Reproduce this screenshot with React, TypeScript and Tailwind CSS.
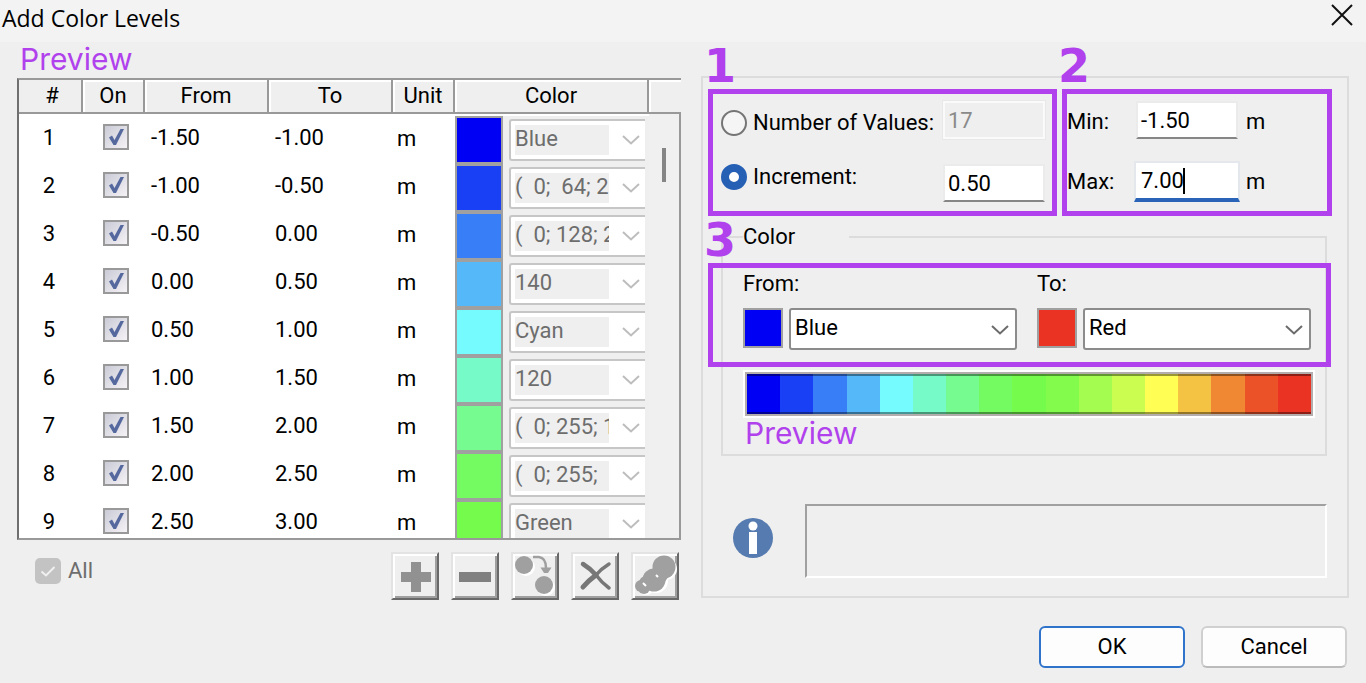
import { useState } from 'react';
import type { ReactNode } from 'react';

interface Level {
  from: string;
  to: string;
  color: string;
  label: string;
}

const LEVELS: Level[] = [
  { from: '-1.50', to: '-1.00', color: '#0000f5', label: 'Blue' },
  { from: '-1.00', to: '-0.50', color: '#1940f5', label: '(\u00a0\u00a00;\u00a0\u00a064; 255)' },
  { from: '-0.50', to: '0.00', color: '#387ef7', label: '(\u00a0\u00a00; 128; 255)' },
  { from: '0.00', to: '0.50', color: '#55b9f9', label: '140' },
  { from: '0.50', to: '1.00', color: '#75fbfd', label: 'Cyan' },
  { from: '1.00', to: '1.50', color: '#76fbc8', label: '120' },
  { from: '1.50', to: '2.00', color: '#75fb8f', label: '(\u00a0\u00a00; 255; 128)' },
  { from: '2.00', to: '2.50', color: '#75fb62', label: '(\u00a0\u00a00; 255;\u00a0\u00a064)' },
  { from: '2.50', to: '3.00', color: '#75fb4c', label: 'Green' },
];

const RAMP = [
  '#0000f5', '#1940f5', '#387ef7', '#55b9f9', '#75fbfd', '#76fbc8', '#75fb8f', '#75fb62', '#75fb4c',
  '#82fb4d', '#a3fc4f', '#cbfd51', '#fffe54', '#f5c344', '#ef8733', '#eb5228', '#ea3323',
];

const TH = 'h-[34px] border-b-2 border-[#999] p-0 font-normal text-center align-middle';
const TH_EDGE = 'shadow-[inset_2px_2px_0_#fff]';

function Chevron({ className }: { className: string }) {
  return (
    <svg className={className} width="18" height="12" viewBox="0 0 18 12" fill="none" stroke="currentColor" strokeWidth="2" aria-hidden="true">
      <path d="M1 2l8 7.5L17 2" />
    </svg>
  );
}

function RowCheckbox({ label }: { label: string }) {
  return (
    <span className="relative block size-[26px]">
      <input
        type="checkbox"
        defaultChecked
        aria-label={label}
        className="peer block size-[26px] appearance-none border-2 border-[#999] bg-linear-to-br from-[#c9cbd6] to-[#f6f2f6]"
      />
      <svg className="pointer-events-none absolute inset-0 hidden peer-checked:block" viewBox="0 0 26 26" fill="#56699f" aria-hidden="true">
        <path d="M6 13.5l3-2 2.5 4.500L17.500 5h3.500L13 21h-2.500z" />
      </svg>
    </span>
  );
}

function ToolButton({ label, children }: { label: string; children: ReactNode }) {
  return (
    <button
      type="button"
      aria-label={label}
      className="size-12 border-2 border-t-[#e3e3e3] border-l-[#e3e3e3] border-r-[#696969] border-b-[#696969] shadow-[inset_2px_2px_0_#fff,inset_-2px_-2px_0_#a0a0a0]"
    >
      <svg viewBox="2 2 44 44" className="block size-11" aria-hidden="true">
        {children}
      </svg>
    </button>
  );
}

function Marker({ children }: { children: string }) {
  return (
    <span className="pointer-events-none absolute -top-[51px] -left-[9px] font-['DejaVu_Sans',sans-serif] text-[46px] leading-[46px] font-bold text-[#b041ec]">
      {children}
    </span>
  );
}

function Caption({ children }: { children: string }) {
  return <p className="font-['Inter',sans-serif] text-[30px] leading-[34px] font-normal text-[#b041ec]">{children}</p>;
}

function ColorPicker({ id, label, color, options }: { id: string; label: string; color: string; options: string[] }) {
  return (
    <div>
      <label htmlFor={id} className="block leading-[30px]">{label}</label>
      <div className="mt-[9px] flex gap-1.5">
        <span className="size-10 shrink-0 border-2 border-[#a0a0a0]" style={{ backgroundColor: color }} />
        <span className="relative min-w-0 flex-1">
          <select id={id} className="block h-[42px] w-full appearance-none rounded-[3px] border-2 border-[#8c8c8c] bg-white px-1 pb-0.5">
            {options.map((o) => <option key={o}>{o}</option>)}
          </select>
          <Chevron className="pointer-events-none absolute top-4 right-2 text-[#6b6b6b]" />
        </span>
      </div>
    </div>
  );
}

function LevelsTable() {
  return (
    <div className="h-[462px] overflow-hidden border-y-2 border-l-2 border-y-[#999] border-l-[#6f6f6f] bg-white">
      <table className="w-full table-fixed border-separate border-spacing-0">
        <colgroup>
          <col className="w-[64px]" />
          <col className="w-[62px]" />
          <col className="w-[124px]" />
          <col className="w-[124px]" />
          <col className="w-[62px]" />
          <col />
          <col className="w-[32px]" />
        </colgroup>
        <thead className="bg-[#efefef]">
          <tr>
            <th className={`${TH} border-r-2 pl-1`}>#</th>
            <th className={`${TH} ${TH_EDGE} border-r-2`}>On</th>
            <th className={`${TH} ${TH_EDGE} border-r-2`}>From</th>
            <th className={`${TH} ${TH_EDGE} border-r-2`}>To</th>
            <th className={`${TH} ${TH_EDGE} border-r-2`}>Unit</th>
            <th className={`${TH} ${TH_EDGE} border-r-2`}>Color</th>
            <th className={`${TH} ${TH_EDGE}`} aria-label="Scroll" />
          </tr>
        </thead>
        <tbody>
          <tr aria-hidden="true">
            <td colSpan={6} className="h-0.5 p-0" />
            <td rowSpan={LEVELS.length + 1} className="border-r-2 border-[#999] bg-[#f0f0f0] p-0 align-top">
              <div className="mx-auto mt-[34px] h-[34px] w-1 bg-[#858585]" />
            </td>
          </tr>
          {LEVELS.map((level, i) => (
            <tr key={level.from} className="h-12">
              <td className="p-0 pb-1 pr-1 text-center">{i + 1}</td>
              <td className="p-0 pb-1.5 pl-5"><RowCheckbox label={`Level ${i + 1} on`} /></td>
              <td className="p-0 pb-1 pl-1.5">{level.from}</td>
              <td className="p-0 pb-1 pl-1.5">{level.to}</td>
              <td className="p-0 pb-0.5 pl-1">m</td>
              <td className="bg-[#efefef] p-0">
                <div className="flex items-center">
                  <span className="size-12 shrink-0 border-2 border-[#a0a0a0]" style={{ backgroundColor: level.color }} />
                  <div className="mr-1 ml-1.5 flex h-[42px] min-w-0 flex-1 items-center justify-between rounded-l-[3px] border-y-2 border-l-2 border-[#c6c6c6] bg-white pr-[5px] pl-1">
                    <select
                      disabled
                      aria-label={`Level ${i + 1} color`}
                      className="h-[30px] w-[94px] appearance-none overflow-hidden bg-[#efefef] pb-0.5 text-[#6d6d6d] opacity-100"
                    >
                      <option>{level.label}</option>
                    </select>
                    <Chevron className="text-[#bdbdbd]" />
                  </div>
                </div>
              </td>
            </tr>
          ))}
        </tbody>
      </table>
    </div>
  );
}

function Toolbar() {
  return (
    <div className="mt-3 flex items-start justify-between pr-0.5 pl-[18px]">
      <label className="mt-[5px] flex items-center gap-[7px] text-[#6d6d6d]">
        <span className="relative block size-[26px]">
          <input type="checkbox" defaultChecked disabled className="block size-[26px] appearance-none rounded-[5px] bg-[#c3c3c3]" />
          <svg className="absolute inset-0" viewBox="0 0 26 26" fill="none" stroke="#f0f0f0" strokeWidth="2" aria-hidden="true">
            <path d="M6.500 13.500l4.500 4L19.500 9" />
          </svg>
        </span>
        All
      </label>
      <div className="flex gap-3">
        <ToolButton label="Add">
          <path fill="#919191" d="M20 10h10v10h10v10H30v10H20V30H10V20h10z" />
        </ToolButton>
        <ToolButton label="Remove">
          <path fill="#808080" d="M8 20h32v10H8z" />
        </ToolButton>
        <ToolButton label="Replace">
          <g fill="#fff">
            <circle cx="15" cy="15" r="9" />
            <circle cx="35" cy="35" r="9" />
          </g>
          <g fill="#a0a0a0">
            <circle cx="13" cy="13" r="9" />
            <circle cx="33" cy="33" r="9" />
            <path d="M29.500 15.500h11L37 21h-4z" />
          </g>
          <path fill="none" stroke="#a0a0a0" strokeWidth="2.500" d="M22 5h6q7 1 7 11" />
        </ToolButton>
        <ToolButton label="Delete">
          <g fill="none" stroke="#777" strokeLinecap="round">
            <path strokeWidth="4.500" d="M12 12q8 5 13 11" />
            <path strokeWidth="3.500" d="M25 23q6 8 13 13M38 12q-8 5-13 11" />
            <path strokeWidth="5" d="M25 23q-8 6-13 12" />
          </g>
        </ToolButton>
        <ToolButton label="Gradient">
          <g fill="#fff" transform="translate(2 2)">
            <circle cx="33" cy="15" r="11" />
            <circle cx="23" cy="27" r="12" />
            <circle cx="13" cy="33" r="8" />
          </g>
          <g fill="#a0a0a0">
            <circle cx="33" cy="15" r="11.500" />
            <circle cx="28" cy="23" r="9" />
            <circle cx="23" cy="28" r="11.500" />
            <circle cx="15" cy="31" r="7" />
            <circle cx="10" cy="34" r="6" />
            <circle cx="13" cy="36" r="6" />
          </g>
          <path stroke="#fff" strokeWidth="2" d="M12 31l3 3M25 23l2 2" />
        </ToolButton>
      </div>
    </div>
  );
}

const FIELD = 'block h-[38px] w-[102px] border-2 border-[#ebebeb] px-[3px]';

function RangeSettings() {
  const [mode, setMode] = useState('increment');
  const radio = 'size-[26px] shrink-0 appearance-none rounded-full border-2 border-[#757575] bg-[#f5f5f5] checked:border-[8px] checked:border-[#2660b5] checked:bg-white';

  return (
    <div className="grid grid-cols-[349fr_270fr] gap-[5px] pr-[15px] pl-[5px]">
      <div className="relative flex h-[127px] justify-between border-[5px] border-[#b041ec] pr-[7px] pl-2">
        <Marker>1</Marker>
        <div className="flex flex-col gap-4 pt-2.5">
          <label className="flex h-[38px] items-center gap-1.5 whitespace-nowrap">
            <input type="radio" name="mode" className={radio} checked={mode === 'count'} onChange={() => setMode('count')} />
            Number of Values:
          </label>
          <label className="flex h-[38px] items-center gap-1.5 whitespace-nowrap">
            <input type="radio" name="mode" className={radio} checked={mode === 'increment'} onChange={() => setMode('increment')} />
            Increment:
          </label>
        </div>
        <div className="flex flex-col gap-[25px] pt-[7px]">
          <input
            aria-label="Number of values"
            defaultValue="17"
            disabled
            className={`${FIELD} border-[#fafafa] bg-[#efefef] text-[#8a8a8a] outline outline-[#e8e8e8]`}
          />
          <input aria-label="Increment" defaultValue="0.50" className={`${FIELD} border-b-[#868686] bg-white`} />
        </div>
      </div>

      <div className="relative flex h-[127px] border-[5px] border-[#b041ec]">
        <Marker>2</Marker>
        <div className="flex w-[67px] flex-col gap-[22px] pt-[9px]">
          <label htmlFor="min" className="h-[38px] leading-[38px]">Min:</label>
          <label htmlFor="max" className="h-[38px] leading-[38px]">Max:</label>
        </div>
        <div className="flex flex-col items-center gap-[22px] pt-[7px]">
          <input id="min" defaultValue="-1.50" className={`${FIELD} border-b-[#868686] bg-white`} />
          <div className="relative">
            <input id="max" defaultValue="7.00" className="block h-[41px] w-[106px] border-2 border-b-4 border-[#e4e8ec] border-b-[#2a64b8] bg-white px-[5px] outline-none" />
            <span className="absolute top-[7px] left-[49px] h-[26px] w-0.5 bg-black" />
          </div>
        </div>
        <div className="flex flex-col gap-[22px] pt-[9px] pl-1.5">
          <span className="h-[38px] leading-[38px]">m</span>
          <span className="h-[38px] leading-[38px]">m</span>
        </div>
      </div>
    </div>
  );
}

function ColorGroup() {
  return (
    <fieldset className="mt-[7px] mr-5 ml-[18px] border-2 border-[#dcdcdc] pb-1">
      <legend className="ml-5 w-[106px] leading-7">Color</legend>
      <div className="relative mt-3 -mr-1.5 -ml-[15px] h-[104px] border-[5px] border-[#b041ec] pt-px pr-[15px] pl-[30px]">
        <Marker>3</Marker>
        <div className="grid grid-cols-2 gap-5">
          <ColorPicker id="from" label="From:" color="#0000f5" options={['Blue', 'Cyan', 'Green']} />
          <ColorPicker id="to" label="To:" color="#ea3323" options={['Red', 'Yellow', 'Green']} />
        </div>
      </div>
      <div className="mt-[3px] mr-2.5 ml-5 bg-white p-0.5">
        <div className="flex h-11 border-2 border-[#b3adad]">
          {RAMP.map((c) => (
            <span key={c} className="flex-1 border-y-2 border-black/40" style={{ backgroundColor: c }} />
          ))}
        </div>
      </div>
      <div className="-mt-0.5 ml-[22px]"><Caption>Preview</Caption></div>
    </fieldset>
  );
}

export default function App() {
  return (
    <div className="min-h-screen bg-[#efefef] font-['Roboto',sans-serif] text-[22px] leading-7 text-black">
      <header className="flex h-[42px] items-start justify-between bg-[#f3f3f3] pr-3 pl-0.5">
        <h1 className="font-['Open_Sans',sans-serif] text-[23px] leading-9">Add Color Levels</h1>
        <button type="button" aria-label="Close" className="pt-1">
          <svg width="24" height="22" viewBox="0 0 24 22" stroke="#111" strokeWidth="2" aria-hidden="true">
            <path d="M2 1l20 20M22 1L2 21" />
          </svg>
        </button>
      </header>

      <main className="grid grid-cols-[664fr_648fr] gap-5 px-[17px]">
        <section>
          <div className="pb-0.5 pl-[3px]"><Caption>Preview</Caption></div>
          <LevelsTable />
          <Toolbar />
        </section>

        <section className="mt-[34px] h-[522px] border-2 border-[#dcdcdc] pt-[11px]">
          <RangeSettings />
          <ColorGroup />
          <div className="mt-12 mr-5 ml-[30px] flex items-start gap-8">
            <svg width="40" height="40" viewBox="0 0 40 40" className="mt-3.5 shrink-0" aria-hidden="true">
              <circle cx="20" cy="20" r="20" fill="#567bb0" />
              <circle cx="20" cy="8" r="4.500" fill="#fff" />
              <path fill="#fff" d="M16 14h8v22h-8z" />
            </svg>
            <output className="h-[74px] flex-1 border-2 border-t-[#a0a0a0] border-r-white border-b-white border-l-[#a0a0a0]" />
          </div>
        </section>
      </main>

      <footer className="mt-[26px] flex justify-end gap-4 pr-[19px] pb-[13px]">
        <button type="button" className="h-[42px] w-[146px] rounded-[6px] border-2 border-[#2f73cb] bg-[#fdfdfd]">OK</button>
        <button type="button" className="h-[42px] w-[146px] rounded-[6px] border-2 border-[#d0d0d0] border-b-[#bbb] bg-[#fdfdfd]">Cancel</button>
      </footer>
    </div>
  );
}
